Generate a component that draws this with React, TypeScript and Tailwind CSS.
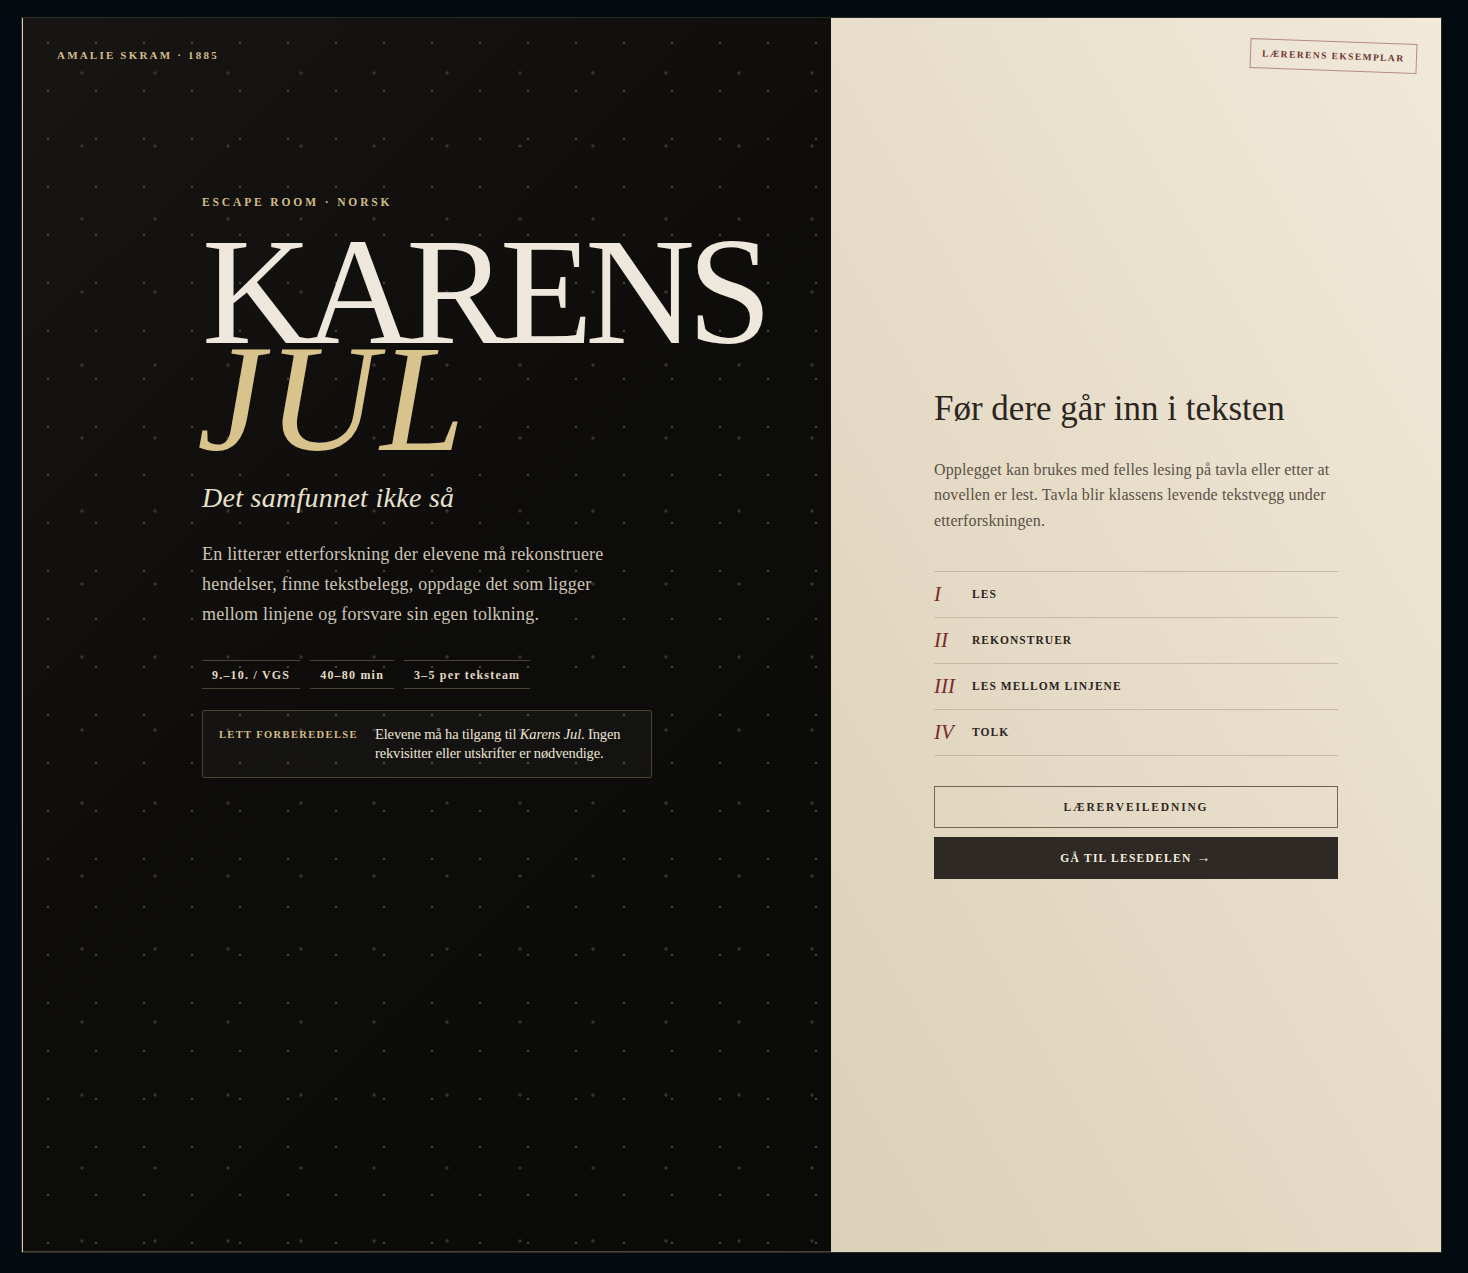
const serif = { fontFamily: '"Liberation Serif", "DejaVu Serif", serif' };

function DotPattern() {
  return (
    <svg className="pointer-events-none absolute inset-0 h-full w-full" aria-hidden="true">
      <defs>
        <pattern id="dots" x="24" y="24" width="48" height="48" patternUnits="userSpaceOnUse">
          <rect x="0" y="0" width="2" height="2" fill="#4a4843" />
        </pattern>
        <pattern id="crosses" x="57" y="53" width="73" height="73" patternUnits="userSpaceOnUse">
          <rect x="0" y="1.5" width="4" height="1" fill="#3f3d39" />
          <rect x="1.5" y="0" width="1" height="4" fill="#3f3d39" />
        </pattern>
      </defs>
      <rect width="100%" height="100%" fill="url(#dots)" />
      <rect width="100%" height="100%" fill="url(#crosses)" />
    </svg>
  );
}

const steps = [
  { n: "I", label: "LES" },
  { n: "II", label: "REKONSTRUER" },
  { n: "III", label: "LES MELLOM LINJENE" },
  { n: "IV", label: "TOLK" },
];

const tags = ["9.–10. / VGS", "40–80 min", "3–5 per teksteam"];

export default function App() {
  return (
    <div className="min-h-screen bg-[#040b10] px-[22px] pt-[18px] pb-[21px]" style={serif}>
      <div className="flex h-[1234px] w-[1419px] overflow-hidden border-l border-[#d9ceb2] shadow-[0_0_0_1px_#2a2a26]">
        {/* LEFT */}
        <div className="relative flex w-[808px] flex-col border-b border-[#4a4230] bg-[linear-gradient(135deg,#171614_0%,#0e0d0c_45%,#0a0a09_100%)]">
          <DotPattern />

          <div className="relative px-[34px] pt-[29px] text-[11px] font-bold tracking-[0.2em] text-[#d4bd86]">
            AMALIE SKRAM · 1885
          </div>

          <div className="relative pl-[179px] pt-[130px]">
            <div className="text-[11.5px] font-bold tracking-[0.25em] text-[#d4bd86]">
              ESCAPE ROOM · NORSK
            </div>

            <h1 className="mt-[28px] leading-[0.705]">
              <span className="block text-[152px] tracking-[-0.05em] text-[#eee8dc]">KARENS</span>
              <span className="-ml-[5px] block text-[152px] italic tracking-[0.02em] text-[#d9c38c]">JUL</span>
            </h1>

            <p className="mt-[24px] text-[28px] italic tracking-[0.01em] text-[#e9e1cf]">Det samfunnet ikke så</p>

            <p className="mt-[20px] w-[430px] text-[18px] leading-[30px] tracking-[0.012em] text-[#cdc4b3]">
              En litterær etterforskning der elevene må rekonstruere hendelser, finne tekstbelegg, oppdage det
              som ligger mellom linjene og forsvare sin egen tolkning.
            </p>

            <div className="mt-[31px] flex gap-[10px]">
              {tags.map((t) => (
                <div
                  key={t}
                  className="border-y border-[#4b4537] px-[10px] pt-[5px] pb-[4px] text-[12px] font-bold tracking-[0.1em] text-[#e3d9c2]"
                >
                  {t}
                </div>
              ))}
            </div>

            <div className="mt-[21px] flex w-[450px] gap-[16px] rounded-[2px] border border-[#4a4331] bg-[#ffffff08] px-[16px] pt-[14px] pb-[14px]">
              <div className="w-[140px] shrink-0 pt-[2px] text-[10.5px] font-bold tracking-[0.13em] text-[#d4bd86]">
                LETT FORBEREDELSE
              </div>
              <p className="text-[14.5px] leading-[19px] tracking-[-0.01em] text-[#eee6d4]">
                Elevene må ha tilgang til <i>Karens Jul</i>. Ingen rekvisitter eller utskrifter er nødvendige.
              </p>
            </div>
          </div>
        </div>

        {/* RIGHT */}
        <div className="relative flex flex-1 items-center justify-center bg-[linear-gradient(60deg,#dbd0b8_0%,#e6dcc8_50%,#f1e9d9_100%)]">
          <div className="absolute right-[24px] top-[23px] rotate-[2deg] border border-[#b68a86] px-[11px] py-[7px] text-[9.5px] font-bold tracking-[0.15em] text-[#6e3434]">
            LÆRERENS EKSEMPLAR
          </div>

          <div className="-mt-[2px] w-[404px]">
            <h2 className="text-[35px] leading-[40px] text-[#2b251f]">Før dere går inn i teksten</h2>
            <p className="mt-[28px] text-[16px] leading-[25.5px] tracking-[0.008em] text-[#5b5145]">
              Opplegget kan brukes med felles lesing på tavla eller etter at novellen er lest. Tavla blir klassens
              levende tekstvegg under etterforskningen.
            </p>

            <div className="mt-[38px] border-t border-[#c6baa4]">
              {steps.map((s) => (
                <div key={s.n} className="flex h-[46px] items-center border-b border-[#c6baa4]">
                  <span className="w-[38px] text-[21px] italic text-[#7a2b2b]">{s.n}</span>
                  <span className="text-[11.5px] font-bold tracking-[0.09em] text-[#2b251f]">{s.label}</span>
                </div>
              ))}
            </div>

            <button className="mt-[30px] flex h-[42px] w-full items-center justify-center border border-[#6f6450] text-[11.5px] font-bold tracking-[0.16em] text-[#2f2922]">
              LÆRERVEILEDNING
            </button>
            <button className="mt-[9px] flex h-[42px] w-full items-center justify-center bg-[#2e2924] text-[11.5px] font-bold tracking-[0.11em] text-[#f3ecdd]">
              GÅ TIL LESEDELEN <span className="ml-[5px] text-[14px] leading-none">→</span>
            </button>
          </div>
        </div>
      </div>
    </div>
  );
}
